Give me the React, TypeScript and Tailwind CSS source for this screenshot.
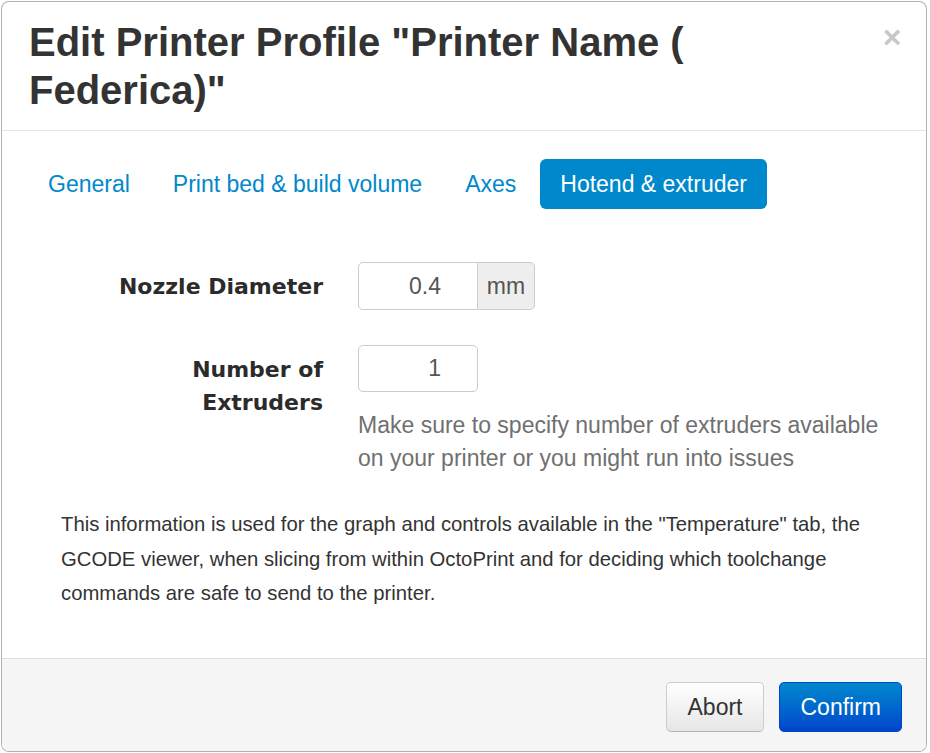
import React from "react";

export default function App() {
  const tabs = ["General", "Print bed & build volume", "Axes", "Hotend & extruder"];
  return (
    <div className="w-[930px] h-[753px] bg-white overflow-hidden font-['Liberation_Sans',Arial,sans-serif]">
      <div className="ml-[1px] mt-[1px] w-[926px] h-[751px] border border-[rgba(0,0,0,0.3)] rounded-[8px] overflow-hidden flex flex-col bg-white">
        {/* Header */}
        <div className="relative px-[27px] pt-[16px] pb-[16px] border-b border-[#e5e5e5]">
          <h3 className="pr-[60px] text-[40px] leading-[48px] font-bold text-[#333]">
            Edit Printer Profile "Printer Name ( Federica)"
          </h3>
          <button className="absolute right-[24px] top-[17px] w-[20px] h-[36px] flex items-center justify-center text-[32px] leading-none font-bold text-[#c8c8c8]">
            ×
          </button>
        </div>

        {/* Body */}
        <div className="flex-1 px-[27px] pt-[28px]">
          <div className="flex gap-[5px]">
            {tabs.map((t, i) => (
              <div
                key={t}
                className={
                  i === 3
                    ? "h-[50px] px-[20px] flex items-center rounded-[6px] bg-[#0088cc] text-white text-[23px]"
                    : "h-[50px] px-[19px] flex items-center rounded-[6px] text-[#0088cc] text-[23px]"
                }
              >
                {t}
              </div>
            ))}
          </div>

          <div className="mt-[53px]">
            <div className="flex">
              <div className="ml-[54px] w-[240px] text-right pt-[8px] text-[22px] leading-[33px] font-bold text-[#2b2b2b] font-['DejaVu_Sans',Verdana,sans-serif]">
                Nozzle Diameter
              </div>
              <div className="ml-[35px] flex h-[48px]">
                <div className="w-[120px] h-[48px] border border-[#ccc] rounded-l-[5px] bg-white flex items-center justify-end pr-[36px] text-[23px] text-[#555]">
                  0.4
                </div>
                <div className="w-[57px] h-[48px] border border-l-0 border-[#ccc] rounded-r-[5px] bg-[#eee] flex items-center justify-center text-[23px] text-[#555]">
                  mm
                </div>
              </div>
            </div>

            <div className="flex mt-[35px]">
              <div className="ml-[54px] w-[240px] text-right pt-[8px] text-[22px] leading-[33px] font-bold text-[#2b2b2b] font-['DejaVu_Sans',Verdana,sans-serif]">
                Number of Extruders
              </div>
              <div className="ml-[35px] flex-1">
                <div className="w-[120px] h-[47px] border border-[#ccc] rounded-[5px] bg-white flex items-center justify-end pr-[36px] text-[23px] text-[#555]">
                  1
                </div>
                <p className="mt-[17px] text-[23px] leading-[33px] text-[#707070]">
                  Make sure to specify number of extruders available on your printer or you might run into issues
                </p>
              </div>
            </div>
          </div>

          <p className="mt-[32px] pl-[32px] pr-[2px] text-[20.3px] leading-[34.5px] text-[#333]">
            This information is used for the graph and controls available in the "Temperature" tab, the GCODE viewer, when slicing from within OctoPrint and for deciding which toolchange commands are safe to send to the printer.
          </p>
        </div>

        {/* Footer */}
        <div className="h-[93px] border-t border-[#ddd] bg-[#f5f5f5] pt-[23px] pr-[24px] flex justify-end gap-[15px]">
          <button className="h-[50px] px-[21px] rounded-[5px] border border-[#ccc] border-b-[#b3b3b3] bg-linear-to-b from-white to-[#e6e6e6] text-[23px] text-[#333]">
            Abort
          </button>
          <button className="h-[50px] px-[20px] rounded-[5px] border border-[#0044cc] bg-linear-to-b from-[#0088cc] to-[#0044cc] text-[23px] text-white">
            Confirm
          </button>
        </div>
      </div>
    </div>
  );
}
